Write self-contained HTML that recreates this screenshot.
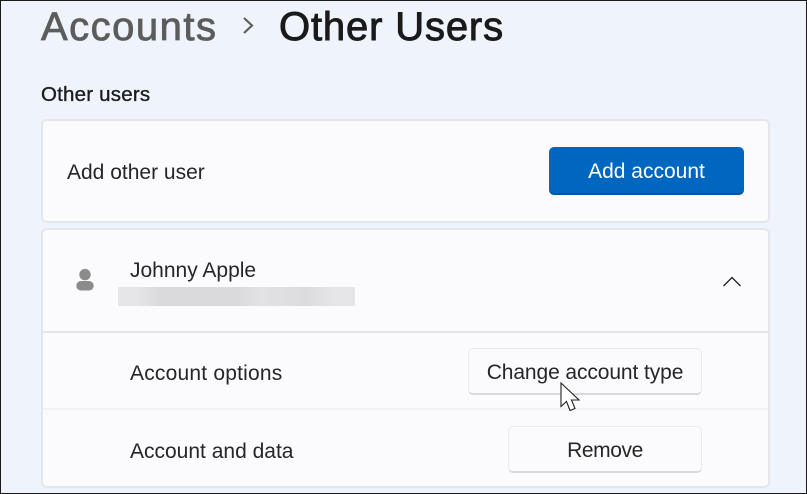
<!DOCTYPE html>
<html><head><meta charset="utf-8"><style>
html,body{margin:0;padding:0}
body{width:807px;height:494px;overflow:hidden;position:relative;background:#eff3fb;font-family:"Liberation Sans",sans-serif;color:#1c1c1c}
.frame{position:absolute;left:0;top:0;width:805px;height:492px;border:1px solid #1a1a1a;z-index:9;pointer-events:none}
.t{position:absolute;white-space:nowrap;line-height:1;font-size:21px;color:#262626}
.card{position:absolute;left:41px;width:729px;box-sizing:border-box;background:#fbfbfe;border:2px solid #e5e5ec;border-radius:6px}
.line{position:absolute;left:43px;width:725px}
.btn{position:absolute;box-sizing:border-box;background:#fbfbfd;border:1.5px solid #ebebef;border-bottom:2px solid #d9d9dd;border-radius:5px}
.c{text-align:center}
</style></head><body>
<div class="t" style="left:41px;top:7px;font-size:40px;color:#5c5c5c;letter-spacing:1.5px;-webkit-text-stroke:.8px #5c5c5c">Accounts</div>
<svg style="position:absolute;left:240px;top:14px" width="18" height="24"><path d="M4 4 L12 11.5 L4 19" fill="none" stroke="#5f5f5f" stroke-width="2.2"/></svg>
<div class="t" style="left:279px;top:7px;font-size:40px;color:#1a1a1a;letter-spacing:.85px;-webkit-text-stroke:.9px #1a1a1a">Other Users</div>
<div class="t" style="left:41px;top:85px;font-size:20.5px;color:#1c1c1c;letter-spacing:.2px;-webkit-text-stroke:.35px #1c1c1c">Other users</div>

<div class="card" style="top:119px;height:104px"></div>
<div class="t" style="left:67px;top:162px">Add other user</div>
<div style="position:absolute;left:549px;top:147px;width:195px;height:48px;box-sizing:border-box;background:#0067c0;border-bottom:2px solid #00529a;border-radius:5px"></div>
<div class="t c" style="left:549px;top:161px;width:195px;color:#fff">Add account</div>

<div class="card" style="top:228px;height:260px"></div>
<svg style="position:absolute;left:74px;top:266px" width="22" height="28"><circle cx="11" cy="8.6" r="5.7" fill="#8b8b8b"/><rect x="2.3" y="15" width="17.4" height="9.5" rx="4.7" fill="#8b8b8b"/></svg>
<div class="t" style="left:130px;top:260px">Johnny Apple</div>
<div style="position:absolute;left:118px;top:287px;width:237px;height:19px;background:linear-gradient(90deg,#e6e6e9 0,#e6e6e9 8%,#dadadd 18%,#dadadd 50%,#e2e2e5 60%,#dcdcdf 80%,#e6e6e9 92%,#e6e6e9 100%)"></div>
<svg style="position:absolute;left:720px;top:272px" width="24" height="20"><path d="M3.5 14 L12 5.5 L20.5 14" fill="none" stroke="#1c1c1c" stroke-width="1.3"/></svg>
<div class="line" style="top:331px;height:2px;background:#e5e5ec"></div>
<div class="t" style="left:130px;top:363px;letter-spacing:.2px">Account options</div>
<div class="btn" style="left:468px;top:348px;width:234px;height:47px"></div>
<div class="t c" style="left:468px;top:362px;width:234px;letter-spacing:-.1px">Change account type</div>
<div class="line" style="top:408px;height:2px;background:#f1f1f6"></div>
<div class="t" style="left:130px;top:441px">Account and data</div>
<div class="btn" style="left:508px;top:426px;width:194px;height:47px"></div>
<div class="t c" style="left:508px;top:440px;width:194px;letter-spacing:-.4px">Remove</div>
<svg style="position:absolute;left:555px;top:379px;z-index:5" width="28" height="36"><path d="M6 4 V27.5 L11.5 22.5 L15 31.5 L20 29.5 L16.5 21 H24 Z" fill="#fff" stroke="#222" stroke-width="1.1" stroke-linejoin="miter"/></svg>
<div class="frame"></div>
</body></html>
